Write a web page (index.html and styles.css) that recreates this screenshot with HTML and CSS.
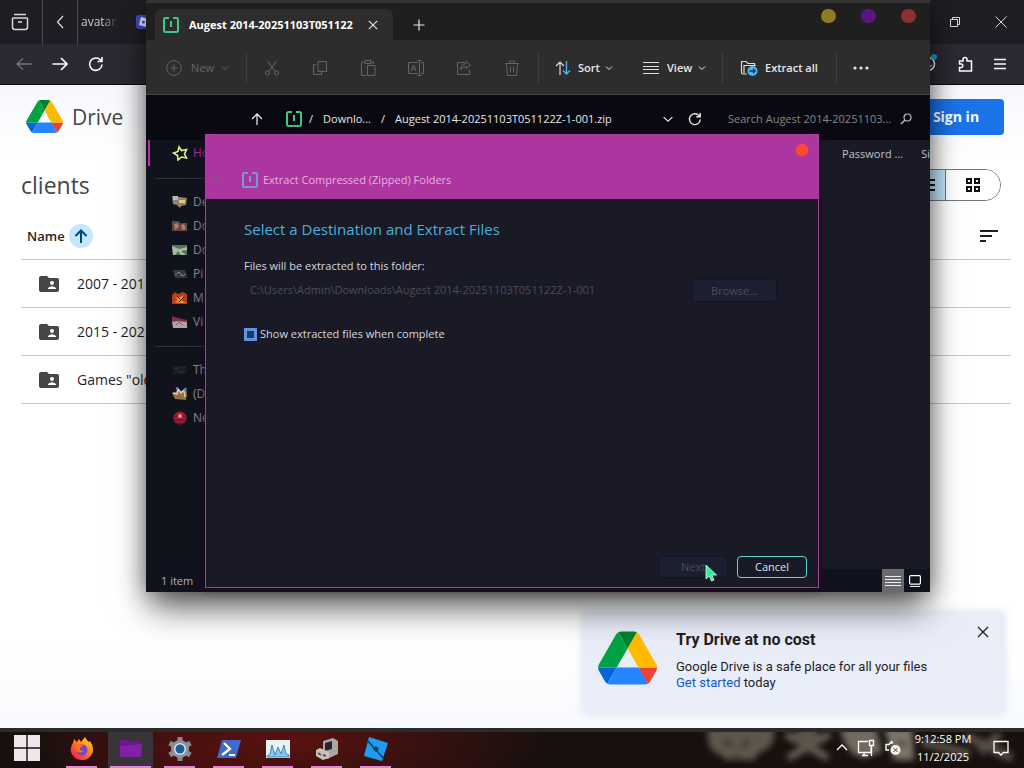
FILE: index.html
```html
<!DOCTYPE html>
<html lang="en">
<head>
<meta charset="utf-8">
<title>Desktop</title>
<link rel="stylesheet" href="styles.css">
</head>
<body>
<svg class="defs" aria-hidden="true">
  <symbol id="drive" viewBox="0 0 87 78">
    <path d="M6.6 66.9l3.9 6.6c.8 1.4 2 2.5 3.3 3.3l13.7-23.8H0c0 1.5.4 3.1 1.2 4.5z" fill="#0066da"/>
    <path d="M43.7 25L29.9 1.2c-1.3.8-2.5 1.9-3.3 3.3L1.2 48.5C.4 49.900 0 51.500 0 53h27.500z" fill="#00a244"/>
    <path d="M73.600 76.800c1.300-.8 2.500-1.900 3.300-3.300l1.600-2.700 7.600-13.300c.8-1.400 1.200-3 1.200-4.500H59.800l5.900 11.500z" fill="#ea4335"/>
    <path d="M43.700 25L57.400 1.200C56.100.4 54.500 0 52.900 0H34.400c-1.600 0-3.200.5-4.500 1.200z" fill="#00832d"/>
    <path d="M59.800 53H27.500L13.800 76.800c1.300.8 2.900 1.200 4.500 1.200h50.800c1.600 0 3.200-.5 4.500-1.200z" fill="#2684fc"/>
    <path d="M73.400 26.500L60.700 4.500c-.8-1.400-2-2.500-3.300-3.300L43.700 25l16.100 28h27.500c0-1.500-.4-3.100-1.200-4.500z" fill="#ffba00"/>
  </symbol>
  <symbol id="zip" viewBox="0 0 16 16"><path d="M6 1H2.500Q1 1 1 2.500V13.500Q1 15 2.500 15H13.500Q15 15 15 13.500V2.500Q15 1 13.500 1H10M8 4V10" fill="none" stroke="currentColor" stroke-width="2"/></symbol>
  <symbol id="chev" viewBox="0 0 8 8"><path d="M1 2.500L4 5.500 7 2.500" fill="none" stroke="currentColor"/></symbol>
  <symbol id="x" viewBox="0 0 12 12"><path d="M1 1L11 11M11 1L1 11" fill="none" stroke="currentColor" stroke-width="1.300"/></symbol>
  <symbol id="reload" viewBox="0 0 16 16"><path d="M14 8.500A6.200 6.200 0 1 1 11.500 3.200L14 5M14 1V5.500H9.500" fill="none" stroke="currentColor" stroke-width="1.600"/></symbol>
  <symbol id="shared" viewBox="0 0 20 16"><path d="M2 0H8L10 2H18Q20 2 20 4V14Q20 16 18 16H2Q0 16 0 14V2Q0 0 2 0Z" fill="#444746"/><circle cx="13" cy="7" r="2" fill="#fff"/><path d="M9 13V12Q10.500 10.300 13 10.300T17 12V13Z" fill="#fff"/></symbol>
</svg>
<main class="desktop">
  <section class="browser">
    <div class="tabs">
      <button class="plain tab-archive" aria-label="Recent tabs"><svg class="i18" viewBox="0 0 18 18"><path d="M3 1.500H15M1.500 5H16.500M1.500 5V14Q1.500 16.500 4 16.500H14Q16.500 16.500 16.500 14V5M7 9H11" fill="none" stroke="currentColor" stroke-width="1.500"/></svg></button>
      <button class="plain tab-back" aria-label="Scroll tabs"><svg class="i14" viewBox="0 0 14 14"><path d="M10 1L4.500 7 10 13" fill="none" stroke="currentColor" stroke-width="1.300"/></svg></button>
      <span class="tab-name">avatar</span>
      <svg class="i14" viewBox="0 0 14 14"><rect width="14" height="14" rx="3" fill="#3d4fc4"/><path d="M5 2L12 4 10 12 3 10Z" fill="#e8ecff"/><path d="M6.500 5.500l2.500.7-.7 2.500-2.500-.7z" fill="#3d4fc4"/></svg>
      <div class="controls">
        <button class="plain" aria-label="Restore"><svg class="i12" viewBox="0 0 12 12"><path d="M1.500 3.500H8.500V10.500H1.500ZM3.500 3.500V1.500H10.500V8.500H8.500" fill="none" stroke="currentColor"/></svg></button>
        <button class="plain" aria-label="Close"><svg class="i12" viewBox="0 0 12 12"><path d="M.5 .5L11.500 11.500M11.500 .5L.5 11.500" fill="none" stroke="currentColor"/></svg></button>
      </div>
    </div>
    <div class="nav">
      <button class="plain faint" aria-label="Back"><svg class="i16" viewBox="0 0 16 16"><path d="M15.500 8H1M7 2.500L1 8 7 13.500" fill="none" stroke="currentColor" stroke-width="1.300"/></svg></button>
      <button class="plain" aria-label="Forward"><svg class="i16" viewBox="0 0 16 16"><path d="M.5 8H15M9 2L15 8 9 14" fill="none" stroke="currentColor" stroke-width="1.700"/></svg></button>
      <button class="plain" aria-label="Reload"><svg class="i16"><use href="#reload"/></svg></button>
      <span class="grow"></span>
      <button class="plain" aria-label="Account"><svg class="i20" viewBox="0 0 20 20"><circle cx="10" cy="10" r="6.500" fill="none" stroke="currentColor" stroke-width="1.500"/><path d="M6 11q4 4 8 0" fill="none" stroke="currentColor"/><circle cx="16" cy="3" r="3" fill="#259de0"/></svg></button>
      <button class="plain" aria-label="Extensions"><svg class="i16" viewBox="0 0 16 16"><path d="M1.500 5H5V3.500A2 2 0 0 1 9 3.500V5H13.500V15H1.500V11.500H3.500A1.800 1.800 0 0 0 3.500 8H1.500Z" fill="none" stroke="currentColor" stroke-width="1.500"/></svg></button>
      <button class="plain" aria-label="Menu"><svg class="i12" viewBox="0 0 12 12"><path d="M0 1.500H12M0 6H12M0 10.500H12" stroke="currentColor" stroke-width="1.400"/></svg></button>
    </div>
    <div class="page">
      <header class="page-head">
        <svg class="logo"><use href="#drive"/></svg><span class="brand">Drive</span>
        <button class="sign">Sign in</button>
      </header>
      <div class="folder-head">
        <h1>clients</h1>
        <div class="toggle">
          <button class="list" aria-label="List view"><svg class="i14" viewBox="0 0 14 14"><path d="M0 2H14M0 7H14M0 12H14" stroke="#111" stroke-width="2"/></svg></button>
          <button class="grid" aria-label="Grid view"><svg class="i14" viewBox="0 0 14 14"><path d="M1 1H5V5H1ZM9 1H13V5H9ZM1 9H5V13H1ZM9 9H13V13H9Z" fill="none" stroke="#111" stroke-width="2"/></svg></button>
        </div>
      </div>
      <div class="names">
        <span>Name</span><button class="order" aria-label="Reverse sort"><svg class="i14" viewBox="0 0 14 14"><path d="M7 14V2M1.500 7L7 1.500 12.500 7" fill="none" stroke="#00476b" stroke-width="2"/></svg></button>
        <button class="plain filter" aria-label="Sort options"><svg class="i18" viewBox="0 0 18 14"><path d="M0 2H18M0 7H12M0 12H6" stroke="#1f1f1f" stroke-width="2"/></svg></button>
      </div>
      <ul class="files">
        <li><svg class="shared"><use href="#shared"/></svg>2007 - 201</li>
        <li><svg class="shared"><use href="#shared"/></svg>2015 - 202</li>
        <li><svg class="shared"><use href="#shared"/></svg>Games "old</li>
      </ul>
      <aside class="promo">
        <svg class="promo-logo"><use href="#drive"/></svg>
        <div class="promo-text"><h2>Try Drive at no cost</h2><p>Google Drive is a safe place for all your files<br><a href="#start">Get started</a> today</p></div>
        <button class="plain promo-close" aria-label="Dismiss"><svg class="i12"><use href="#x"/></svg></button>
      </aside>
    </div>
  </section>

  <section class="explorer">
    <div class="titlebar">
      <div class="etab"><svg class="i16 green"><use href="#zip"/></svg><span class="etab-name">Augest 2014-20251103T051122</span><button class="plain" aria-label="Close tab"><svg class="i10"><use href="#x"/></svg></button></div>
      <button class="plain add" aria-label="New tab"><svg class="i12" viewBox="0 0 12 12"><path d="M6 .5V11.500M.5 6H11.500" stroke="currentColor" stroke-width="1.200"/></svg></button>
      <div class="dots"><button class="dot yellow" aria-label="Minimize"></button><button class="dot purple" aria-label="Maximize"></button><button class="dot red" aria-label="Close window"></button></div>
    </div>
    <div class="toolbar">
      <button class="tool new" disabled><svg class="i16" viewBox="0 0 16 16"><circle cx="8" cy="8" r="7.300" fill="none" stroke="currentColor"/><path d="M8 4.500V11.500M4.500 8H11.500" stroke="currentColor"/></svg>New<svg class="i8"><use href="#chev"/></svg></button>
      <i class="sep"></i>
      <button class="tool icon" disabled aria-label="Cut"><svg class="i16" viewBox="0 0 16 16"><path d="M3.500 1L11 11.500M12.500 1L5 11.500" fill="none" stroke="currentColor"/><circle cx="3.500" cy="13" r="2" fill="none" stroke="currentColor"/><circle cx="12.500" cy="13" r="2" fill="none" stroke="currentColor"/></svg></button>
      <button class="tool icon" disabled aria-label="Copy"><svg class="i16" viewBox="0 0 16 16"><path d="M6 1.500H14.500V11.500H6ZM4 4.500H1.500V14.500H9.500V12" fill="none" stroke="currentColor"/></svg></button>
      <button class="tool icon" disabled aria-label="Paste"><svg class="i16" viewBox="0 0 16 16"><path d="M6 15.500H1.500V2H5M11 2H13.500V4M5 .5H11V3.500H5ZM7.500 5.500H15V15.500H7.500Z" fill="none" stroke="currentColor"/></svg></button>
      <button class="tool icon" disabled aria-label="Rename"><svg class="i16" viewBox="0 0 16 16"><path d="M9.500 2.500H.5V13.500H9.500M13.500 2.500H15.500V13.500H13.500M11.500 0V16M9.500 .5H13.500M9.500 15.500H13.500M3 11L5.500 5 8 11M4 9H7" fill="none" stroke="currentColor"/></svg></button>
      <button class="tool icon" disabled aria-label="Share"><svg class="i16" viewBox="0 0 16 16"><path d="M8 2.500H1.500V14.500H13.500V9.500M10 1L14.500 5 10 8.500V6.500Q6 6.500 4.500 10 5 4 10 3.500Z" fill="none" stroke="currentColor"/></svg></button>
      <button class="tool icon" disabled aria-label="Delete"><svg class="i16" viewBox="0 0 16 16"><path d="M1 3.500H15M5.500 3V1H10.500V3M2.500 3.500L3.500 15.500H12.500L13.500 3.500M6.500 6.500V12.500M9.500 6.500V12.500" fill="none" stroke="currentColor"/></svg></button>
      <i class="sep"></i>
      <button class="tool sort"><svg class="i16" viewBox="0 0 16 16"><path d="M5 15V2M1 6L5 2 9 6" fill="none" stroke="#ddd" stroke-width="1.200"/><path d="M11.500 1V14M8 10.500L11.500 14 15 10.500" fill="none" stroke="#4cb8f0" stroke-width="1.300"/></svg>Sort<svg class="i8"><use href="#chev"/></svg></button>
      <button class="tool view"><svg class="i16" viewBox="0 0 16 16"><path d="M0 2.500H16M0 6.500H16M0 9.500H16M0 13.500H16" stroke="#ddd"/></svg>View<svg class="i8"><use href="#chev"/></svg></button>
      <i class="sep"></i>
      <button class="tool extract"><svg class="i18" viewBox="0 0 18 18"><path d="M7 15H3Q1.500 15 1.500 13.500V2.500H6L8 4.500H14.500V7M4 14V6.500H16" fill="none" stroke="#ddd" stroke-width="1.200"/><circle cx="12.500" cy="12" r="5" fill="#4cb8f0"/><path d="M9.500 12H15M13 9.800L15.200 12 13 14.200" fill="none" stroke="#10364e" stroke-width="1.300"/></svg>Extract all</button>
      <i class="sep"></i>
      <button class="tool more" aria-label="More"><svg class="i16" viewBox="0 0 16 16"><circle cx="2" cy="8" r="1.600" fill="currentColor"/><circle cx="8" cy="8" r="1.600" fill="currentColor"/><circle cx="14" cy="8" r="1.600" fill="currentColor"/></svg></button>
    </div>
    <div class="address">
      <button class="plain" aria-label="Up"><svg class="i12" viewBox="0 0 12 12"><path d="M6 12V1M1 6L6 1 11 6" fill="none" stroke="currentColor" stroke-width="1.300"/></svg></button>
      <svg class="i16 green crumb-icon"><use href="#zip"/></svg>
      <nav class="crumbs"><span>/</span><a href="#downloads">Downlo...</a><span>/</span><a href="#zip-root">Augest 2014-20251103T051122Z-1-001.zip</a></nav>
      <button class="plain drop" aria-label="History"><svg class="i10" viewBox="0 0 8 8"><path d="M.5 2.500L4 5.800 7.500 2.500" fill="none" stroke="currentColor"/></svg></button>
      <button class="plain again" aria-label="Refresh"><svg class="i14"><use href="#reload"/></svg></button>
      <label class="search"><input type="text" aria-label="Search" placeholder="Search Augest 2014-20251103..."><svg class="i12" viewBox="0 0 12 12"><circle cx="7.500" cy="4.500" r="3.500" fill="none" stroke="#bbb" stroke-width="1.200"/><path d="M5 7L1 11" stroke="#bbb" stroke-width="1.500"/></svg></label>
    </div>
    <div class="content">
      <nav class="side">
        <a class="home" href="#home"><svg class="i16" viewBox="0 0 16 16"><path d="M7 2L9.500 5.500 14.500 4.500 12.500 9 14.500 13 9.500 12 6 15 5.500 10.500 1.500 8 6 6.500Z" fill="none" stroke="#d9f58a" stroke-width="1.600"/></svg>Ho</a>
        <hr>
        <a href="#desktop"><svg class="i16" viewBox="0 0 16 16"><path d="M0 2L8 3 15 4 14 11 9 12 8 14 5 11 1 10Z" fill="#938469"/><path d="M1 2h5v4H1z" fill="#a8bdc5"/><path d="M7 6h6v3H7z" fill="#e0c58b"/></svg>De</a>
        <a href="#documents"><svg class="i16" viewBox="0 0 16 16"><path d="M0 3H7L8 5H15V13H0Z" fill="#594a47"/><path d="M2 6l4-1 1 4-4 3zM9 7l3-1 2 5-4 1z" fill="#bd7864"/></svg>Do</a>
        <a href="#downloads2"><svg class="i16" viewBox="0 0 16 16"><path d="M0 3H15V13H1Z" fill="#52745f"/><path d="M0 4l7 3 8-2v3l-6 1 5 4H9L6 9l-3 4H1z" fill="#a5bda1"/></svg>Do</a>
        <a href="#pictures"><svg class="i16" viewBox="0 0 16 16"><path d="M1 4H13L15 12H3Z" fill="#35383d"/><path d="M3 9l4-3 3 4 4-2" fill="none" stroke="#85898b"/></svg>Pi</a>
        <a href="#music"><svg class="i16" viewBox="0 0 16 16"><path d="M0 5L3 2 6 4 11 2 15 4V14H0Z" fill="#b13e18"/><path d="M2 6l4 2 6-3-3 5 5 3H8l-6-1 4-2z" fill="#f28c2c"/><path d="M5 6l3 3M12 7l-5 5" stroke="#371b17"/></svg>M</a>
        <a href="#videos"><svg class="i16" viewBox="0 0 16 16"><path d="M0 2L6 4 15 6V9H0Z" fill="#7c2e43"/><path d="M0 8l5-1 10 1v6H1z" fill="#b1a1a6"/><path d="M4 11l3-3 4 3" stroke="#62646b" fill="none"/></svg>Vi</a>
        <hr>
        <a href="#pc"><svg class="i16" viewBox="0 0 16 16"><path d="M1 4H14V12H1Z" fill="#1c1d25"/><path d="M3 6l3 2M11 6l2-1M6 10h5" stroke="#383743"/></svg>Th</a>
        <a href="#drive-d"><svg class="i16" viewBox="0 0 16 16"><path d="M0 7L4 6 6 2 9 5 14 2 15 8 14 14 3 13Z" fill="#927047"/><path d="M1 7l4 1 1-5 3 4 3-3 1 7" fill="none" stroke="#d6cfb2" stroke-width="1.500"/><path d="M6 3l-2-1M12 5l2-3" stroke="#528fe1" stroke-width="2"/></svg>(D</a>
        <a href="#network"><svg class="i16" viewBox="0 0 16 16"><circle cx="8" cy="8" r="6.500" fill="#a81c36"/><path d="M3 7Q8 3 13 7M3 10H13M5 13H11" stroke="#50111c" fill="none"/><circle cx="8" cy="6" r="2" fill="#e2949b"/></svg>Ne</a>
      </nav>
      <div class="columns"><span>Password ...</span><span>Si</span></div>
    </div>
    <div class="status"><span>1 item</span>
      <button class="plain details" aria-label="Details"><svg class="i16" viewBox="0 0 16 16"><path d="M0 3.500H16M0 6.500H16M0 9.500H16M0 12.500H16" stroke="#eee"/></svg></button>
      <button class="plain large" aria-label="Large icons"><svg class="i12" viewBox="0 0 12 12"><rect x=".6" y=".6" width="10.800" height="8.500" rx="1" fill="none" stroke="#fff" stroke-width="1.200"/><path d="M1 11.400H11" stroke="#fff"/></svg></button>
    </div>
  </section>

  <section class="dialog" role="dialog" aria-label="Extract">
    <header class="dialog-head">
      <button class="close-dot" aria-label="Close dialog"></button>
      <div class="dialog-title"><button class="plain back" aria-label="Previous"><svg class="i8" viewBox="0 0 8 8"><path d="M5.500 0L2 4 5.500 8" fill="none" stroke="#7b5a78" stroke-width="1.500"/></svg></button><svg class="i16 blue"><use href="#zip"/></svg><span>Extract Compressed (Zipped) Folders</span></div>
    </header>
    <form class="dialog-body">
      <h2>Select a Destination and Extract Files</h2>
      <label for="dest">Files will be extracted to this folder:</label>
      <div class="path"><input id="dest" type="text" value="C:\Users\Admin\Downloads\Augest 2014-20251103T051122Z-1-001" disabled><button type="button" class="btn browse" disabled>Browse...</button></div>
      <label class="check"><input type="checkbox">Show extracted files when complete</label>
    </form>
    <footer><button class="btn next" disabled>Next</button><button class="btn cancel">Cancel</button></footer>
  </section>
  <svg class="cursor" viewBox="0 0 12 18"><path d="M1 1V15L4.300 12 6.500 17 9 16 6.800 11H11.500Z" fill="#2df08f" stroke="#eafff4" stroke-width=".8"/></svg>
</main>

<footer class="taskbar">
  <svg class="skulls" viewBox="0 0 324 36" preserveAspectRatio="none" aria-hidden="true">
    <defs><filter id="soft"><feGaussianBlur stdDeviation="3"/></filter></defs>
    <g filter="url(#soft)" fill="none" stroke="#6b6459">
      <path d="M8 -4Q6 20 20 22L26 28H54L60 20Q76 16 74 -4Z" fill="#5d564c" stroke="none"/>
      <path d="M86 2L128 26M130 2L88 26" stroke-width="7"/><circle cx="107" cy="5" r="12" fill="#5a534a" stroke="none"/>
      <path d="M140 -4Q146 24 164 26L182 20 176 -4Z" fill="#726b60" stroke="none"/>
      <path d="M184 -4L194 28 214 28 212 -4Z" fill="#7d766a" stroke="none"/>
      <path d="M222 10L270 22M266 4L312 26M300 2L280 20" stroke-width="9" stroke="#544d44"/>
      <path d="M24 8L32 14M48 8L42 15M36 22V27M198 9L206 14" stroke="#2b2520" stroke-width="4"/>
    </g>
  </svg>
  <button class="task start" aria-label="Start"><svg class="i26" viewBox="0 0 26 26"><path d="M0 0H12.300V12.300H0ZM13.700 0H26V12.300H13.700ZM0 13.700H12.300V26H0ZM13.700 13.700H26V26H13.700Z" fill="#eee8ea"/></svg></button>
  <button class="task open" aria-label="Firefox"><svg class="i24" viewBox="0 0 24 24"><defs><linearGradient id="ff" x1="1" y1="0" x2=".2" y2="1"><stop offset="0" stop-color="#ffe226"/><stop offset=".45" stop-color="#ff8a16"/><stop offset="1" stop-color="#f01955"/></linearGradient></defs><path d="M3 6L4 2 7 5 9 2 11 5 15 0Q17 4 19 5L20 4Q25 11 22 17 18 24 11 23 3 22 1 15 0 10 3 6Z" fill="url(#ff)"/><circle cx="12" cy="13" r="5.500" fill="#7147c9"/><path d="M5 7Q9 6 13 9L10 11Q9 14 14 14 9 18 6 13Z" fill="#ff6b20"/></svg></button>
  <button class="task open active" aria-label="File Explorer"><svg class="i24" viewBox="0 0 24 24"><path d="M1 5Q1 3 3 3H9L11 5H21Q23 5 23 7L22 19Q22 20 20 20H3Q1 20 1 18Z" fill="#6f1692"/><path d="M1 9L23 7 22 19Q22 20 20 20H3Q1 20 1 18Z" fill="#7f22a6"/></svg></button>
  <button class="task open" aria-label="Settings"><svg class="i24" viewBox="0 0 24 24"><path d="M12 0V24M1.600 6L22.400 18M1.600 18L22.400 6" stroke="#89898d" stroke-width="5"/><circle cx="12" cy="12" r="9" fill="#909095"/><circle cx="12" cy="12" r="6" fill="#d8e1e8"/><circle cx="12" cy="12" r="4.500" fill="#176197"/></svg></button>
  <button class="task open" aria-label="PowerShell"><svg class="i24" viewBox="0 0 24 24"><path d="M5 3H24L19 21H0Z" fill="#3f69cb"/><path d="M7 6L13 12 5 18M12 18H18" fill="none" stroke="#fff" stroke-width="2.200"/></svg></button>
  <button class="task open" aria-label="Monitor"><svg class="i24" viewBox="0 0 24 24"><rect y="3" width="24" height="18" fill="#e9f2f5"/><path d="M1 19L4 17 6 8 9 18 12 10 15 17 18 8 20 17 23 18V20H1Z" fill="#8cc6e4" stroke="#3a8fc4"/></svg></button>
  <button class="task open" aria-label="Printer utility"><svg class="i24" viewBox="0 0 24 24"><path d="M8 4L18 1 23 4V17L12 22 8 18Z" fill="#aaa6a3"/><path d="M10 6L17 4V12L10 14Z" fill="#28262b"/><path d="M1 13L5 11 14 15V21L8 23 1 19Z" fill="#c8c4bd"/><path d="M3 16l3 2M8 18l3 1" stroke="#555" stroke-width="2"/></svg></button>
  <button class="task open" aria-label="Studio"><svg class="i24" viewBox="0 0 24 24"><path d="M5 0L24 6 18 24 0 19Z" fill="#1c9cf0"/><path d="M3 3L20 22" stroke="#153857" stroke-width="1.500"/><path d="M12 9L15 12 12 15 9 12Z" fill="#153857"/></svg></button>
  <div class="tray">
    <svg class="i12" viewBox="0 0 12 12"><path d="M1 8L6 3 11 8" fill="none" stroke="currentColor" stroke-width="1.300"/></svg>
    <svg class="i18" viewBox="0 0 18 18"><path d="M11 2.500H1.500V13.500H14V8M5 16.500H11M7 14V16M12.500 1.500H16.500V6.500H12.500ZM14.500 7V17" fill="none" stroke="currentColor" stroke-width="1.300"/></svg>
    <svg class="i18" viewBox="0 0 18 18"><path d="M8 2V5M8 2L5 5.500H2V11H5" fill="none" stroke="currentColor" stroke-width="1.400"/><circle cx="11.500" cy="11" r="5" fill="#f4f4f4"/><path d="M9.500 9L13.500 13M13.500 9L9.500 13" stroke="#444"/></svg>
    <div class="clock"><span>9:12:58 PM</span><span>11/2/2025</span></div>
    <svg class="i16" viewBox="0 0 16 16"><path d="M1 1.500H15V12.500H10.500L8 15 5.500 12.500H1Z" fill="none" stroke="currentColor" stroke-width="1.300"/></svg>
  </div>
</footer>
</body>
</html>
```
FILE: styles.css
```css
* { box-sizing: border-box; }
body { margin: 0; min-height: 100vh; display: flex; flex-direction: column; overflow: hidden; font: 11px/16px "Open Sans", "Noto Sans", sans-serif; }
h1, h2, p, ul { margin: 0; padding: 0; }
button { font: inherit; color: inherit; padding: 0; border: 0; }
a { text-decoration: none; color: inherit; }
svg { flex: none; display: block; }
.defs { display: none; }
.i8 { width: 8px; height: 8px; }
.i10 { width: 10px; height: 10px; }
.i12 { width: 12px; height: 12px; }
.i14 { width: 14px; height: 14px; }
.i16 { width: 16px; height: 16px; }
.i18 { width: 18px; height: 18px; }
.i20 { width: 20px; height: 20px; }
.i24 { width: 24px; height: 24px; }
.i26 { width: 26px; height: 26px; }
.plain { background: none; display: grid; place-items: center; flex: none; }
.grow { flex: 1; }
.green { color: #3cc98a; }
.blue { color: #7a96d8; }

.desktop { flex: 1; display: flex; position: relative; overflow: hidden; }
.browser { flex: 1; display: flex; flex-direction: column; }
.tabs { height: 44px; display: flex; align-items: center; background: #1f1e25; color: #d8d8dc; }
.tab-archive { width: 43px; height: 44px; padding-right: 3px; border-right: 1px solid #4b4a52; }
.tab-back { width: 35px; height: 44px; border-right: 1px solid #4b4a52; }
.tab-name { width: 58px; padding-left: 3px; font-size: 12px; background: linear-gradient(90deg, #d8d8dc 24px, transparent 40px); background-clip: text; color: transparent; }
.controls { display: flex; gap: 34px; margin-left: auto; padding-right: 17px; }
.nav { height: 41px; padding: 0 18px 0 16px; display: flex; align-items: center; gap: 20px; background: #2b2a32; color: #fbfbfe; border-bottom: 1px solid #0d0c12; }
.nav .faint { color: #77767d; }

.page { flex: 1; display: flex; flex-direction: column; padding: 0 13px 15px 21px; background: linear-gradient(#f6f8fd, #fff 72px, #fff 560px, #f8fafd); color: #1f1f1f; }
.page-head { height: 63px; display: flex; align-items: center; padding: 0 7px 0 5px; }
.logo { width: 37px; height: 33px; }
.brand { margin-left: 9px; font-size: 21px; line-height: 28px; color: #444746; }
.sign { margin-left: auto; width: 96px; height: 36px; border-radius: 4px; background: #1a73e8; color: #fff; font-size: 14px; font-weight: 700; }
.folder-head { height: 72px; padding: 2px 10px 0 0; display: flex; align-items: center; justify-content: space-between; }
h1 { font-size: 23px; line-height: 28px; font-weight: 400; color: #444746; }
.toggle { display: flex; height: 32px; border: 1px solid #747775; border-radius: 16px; overflow: hidden; }
.toggle button { width: 54px; display: grid; place-items: center; background: #fff; }
.toggle .list { background: #c2e7ff; border-right: 1px solid #747775; width: 55px; padding-left: 20px; }
.names { height: 39px; padding: 0 13px 8px 6px; display: flex; align-items: center; gap: 4px; font-size: 13px; font-weight: 600; }
.order { width: 24px; height: 24px; display: grid; place-items: center; border-radius: 12px; background: #c2e7ff; }
.filter { margin-left: auto; }
.files { list-style: none; border-top: 1px solid #c4c7c5; }
.files li { height: 48px; padding-left: 18px; display: flex; align-items: center; gap: 18px; border-bottom: 1px solid #c4c7c5; font-size: 14px; font-weight: 500; }
.shared { width: 20px; height: 16px; }
.promo { align-self: flex-end; width: 421px; height: 101px; margin-top: auto; margin-right: 7px; padding: 14px 15px 0; display: flex; align-items: flex-start; gap: 19px; background: #e9edf8; box-shadow: 0 0 8px 2px #e3e9f1; font-family: Roboto, sans-serif; border-radius: 4px; }
.promo-logo { width: 59px; height: 54px; margin-top: 5px; }
.promo-text { padding-top: 4px; }
.promo h2 { font-size: 16px; line-height: 20px; font-weight: 700; margin-bottom: 9px; }
.promo p { font-size: 13px; line-height: 16px; }
.promo a { color: #0b57d0; }
.promo-close { margin-left: auto; }

.explorer { position: absolute; left: 146px; top: 0; width: 784px; height: 592px; display: flex; flex-direction: column; background: #191a26; color: #e8e8e8; box-shadow: 0 0 22px rgba(0, 0, 0, .35), 0 20px 32px -4px rgba(0, 0, 0, .6); }
.titlebar { height: 40px; padding: 0 14px 0 9px; display: flex; align-items: flex-end; background: #1f1f1f; border-top: 3px solid #333; }
.etab { width: 238px; height: 31px; padding: 0 15px 0 8px; display: flex; align-items: center; gap: 10px; background: #2d2d2d; border-radius: 7px 7px 0 0; }
.etab-name { flex: 1; white-space: nowrap; font-weight: 700; color: #fff; }
.add { width: 52px; height: 31px; }
.dots { display: flex; align-self: flex-start; gap: 25px; margin-left: auto; padding-top: 6px; }
.dot { width: 15px; height: 14px; border-radius: 7px; }
.yellow { background: #8f7c22; }
.purple { background: #5a1583; }
.red { background: #8c3033; }
.toolbar { height: 55px; padding: 1px 20px 0; display: flex; align-items: center; background: #2d2d2d; border-bottom: 1px solid #454548; }
.sep { width: 1px; height: 32px; background: #3f3f3f; }
.tool { height: 32px; display: flex; align-items: center; justify-content: flex-start; gap: 8px; background: none; flex: none; font-weight: 600; white-space: nowrap; }
.tool .i8 { margin-left: -2px; }
.tool:disabled { color: #656565; font-weight: 400; }
.new { width: 80px; gap: 9px; }
.icon { width: 48px; justify-content: center; }
.sep + .icon { margin-left: 1px; }
.icon + .sep { margin-left: 2px; }
.sort { width: 104px; padding-left: 16px; gap: 7px; }
.view { width: 79px; }
.extract { width: 113px; padding-left: 17px; gap: 7px; }
.more { padding-left: 16px; }
.address { height: 45px; padding: 2px 18px 0 105px; display: flex; align-items: center; background: #090a11; }
.crumb-icon { margin-left: 23px; }
.crumbs { display: flex; gap: 10px; margin-left: 7px; white-space: nowrap; flex: 1; }
.again { margin: 0 26px 0 15px; }
.search { width: 184px; display: flex; align-items: center; gap: 8px; }
.search input { flex: 1; min-width: 0; padding: 0; border: 0; background: none; color: #999; font: inherit; text-overflow: ellipsis; }
.search input::placeholder { color: #86878c; }
.content { flex: 1; display: flex; }
.side { width: 80px; padding-left: 10px; display: flex; flex-direction: column; background: #10131c; color: #8b8d94; }
.side a { height: 24px; padding-left: 16px; display: flex; align-items: center; gap: 5px; font-size: 12px; }
.side .home { height: 26px; margin-left: -8px; padding-left: 22px; border-left: 2px solid #c02bb4; color: #a92a9f; }
.side hr { width: 100%; height: 1px; margin: 12px 0 11px; border: 0; background: #30343e; }
.columns { flex: 1; display: flex; justify-content: flex-end; gap: 18px; padding-top: 6px; color: #bfc1c9; }
.status { height: 23px; padding: 0 9px 0 15px; display: flex; align-items: center; background: #10121d; color: #adb0b8; }
.details { width: 22px; height: 23px; margin-left: auto; background: #696a6e; }
.large { margin-left: 5px; }

.dialog { position: absolute; left: 205px; top: 134px; width: 614px; height: 454px; display: flex; flex-direction: column; border: 1px solid #9c4597; background: #191a26; color: #d5d7dd; box-shadow: 0 0 10px 1px rgba(40, 0, 45, .7); }
.dialog-head { height: 64px; padding: 9px 10px 11px 8px; display: flex; flex-direction: column; justify-content: space-between; background: #ad35a0; }
.close-dot { width: 12px; height: 12px; border-radius: 6px; background: #fb4b2e; box-shadow: 0 0 3px #e33f55; align-self: flex-end; }
.dialog-title { display: flex; align-items: center; color: #e4b3df; gap: 5px; }
.back { margin-right: 15px; }
.dialog-body { flex: 1; padding: 19px 41px 0 38px; display: flex; flex-direction: column; align-items: flex-start; }
.dialog h2 { font-size: 15px; line-height: 22px; font-weight: 400; color: #4aafdc; margin-bottom: 18px; }
.path { align-self: stretch; height: 22px; margin: 5px 0 25px; display: flex; gap: 8px; }
.path input { flex: 1; min-width: 0; padding: 0 6px; border: 0; background: none; color: #4b4d57; font: inherit; }
.btn { height: 22px; width: 70px; border: 1px solid #11142c; border-radius: 4px; background: #1b1f30; color: #4b4e5a; font: inherit; }
.dialog .browse { width: 85px; height: 23px; }
.check { display: flex; align-items: center; gap: 3px; }
.check input { appearance: none; width: 13px; height: 13px; margin: 0; border: 3px solid #6393dc; background: #203a68; }
.dialog footer { padding: 0 11px 9px; display: flex; justify-content: flex-end; gap: 9px; }
.dialog .cancel { border-color: #6bd3cd; color: #dfe1e7; background: #181a27; }
.cursor { position: absolute; left: 705px; top: 564px; width: 12px; height: 18px; }

.taskbar { position: relative; height: 40px; display: flex; border-top: 4px solid #2b2a2c; color: #fff; background: radial-gradient(ellipse 260px 70px at 290px 10px, #5a1210, transparent), radial-gradient(ellipse 140px 50px at 180px 20px, #3b0f0e, transparent), #17100e; }
.skulls { position: absolute; right: 0; top: 0; width: 324px; height: 36px; }
.task { width: 49px; background: none; display: grid; place-items: center; }
.start { width: 57px; padding: 0 3px 4px 0; }
.open { padding-bottom: 3px; background: linear-gradient(#e484d4, #e484d4) center bottom / 31px 2px no-repeat; }
.active { background-color: #38343a; background-size: 41px 2px; width: 45px; margin: 0 2px; }
.tray { position: relative; margin-left: auto; padding: 0 15px 4px 0; display: flex; align-items: center; gap: 9px; }
.clock { width: 60px; margin: 0 11px 0 2px; display: flex; flex-direction: column; text-align: center; line-height: 18px; white-space: nowrap; }
```
